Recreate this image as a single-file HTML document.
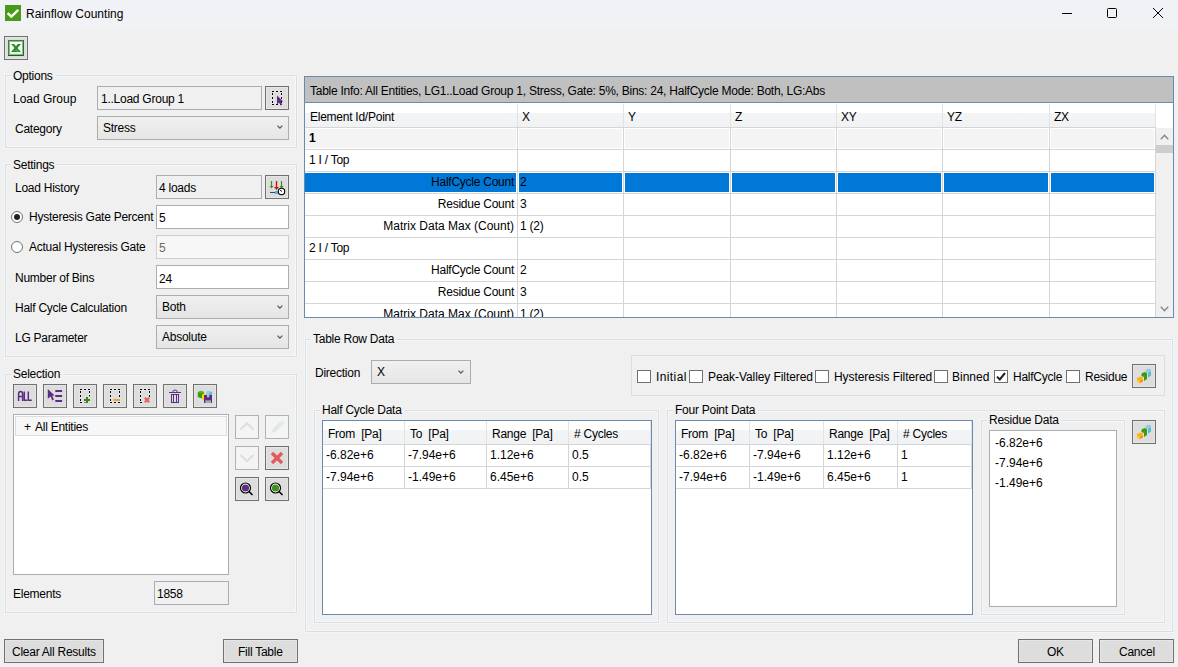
<!DOCTYPE html>
<html><head><meta charset="utf-8">
<style>
*{box-sizing:border-box;margin:0;padding:0}
html,body{width:1178px;height:667px;overflow:hidden;background:#f0f0f0}
body{position:relative;font-family:"Liberation Sans",sans-serif;font-size:12px;color:#000}
.a{position:absolute}
.t{position:absolute;white-space:nowrap;line-height:15px;letter-spacing:-0.25px;margin-top:1px}
.grp{position:absolute;border:1px solid #d5dfe5;box-shadow:inset 0 0 0 1px rgba(255,255,255,0.45),0 0 0 1px rgba(255,255,255,0.35)}
.lbl{position:absolute;background:#f0f0f0;padding:0 3px 0 2px;white-space:nowrap;line-height:15px;letter-spacing:-0.25px;margin-top:1px}
.tb{position:absolute;border:1px solid #abadb3;background:#fff}
.ro{background:#f0f0f0}
.dis{border-color:#ccced2;background:#f7f7f7;color:#6b6b6b}
.btn{position:absolute;border:1px solid #707070;background:#dddddd;box-shadow:inset 0 0 0 1px #e6e6e6}
.btnd{position:absolute;border:1px solid #adb2b5;background:#f4f4f4}
.cb{position:absolute;border:1px solid #acacac;background:linear-gradient(#f0f0f0,#e5e5e5)}
.chev{position:absolute;width:7px;height:4px;background:no-repeat}
.chk{position:absolute;width:14px;height:13px;border:1px solid #707070;background:#fff}
.grid{position:absolute;border:1px solid #688caf;background:#fff;overflow:hidden}
.hl{position:absolute;height:1px;background:#d5d5d5}
.vl{position:absolute;width:1px;background:#d5d5d5}
</style></head><body>
<!-- title bar -->
<div class="a" style="left:0;top:0;width:1178px;height:29px;background:#f1f2f5"></div>
<svg class="a" style="left:5px;top:5px" width="16" height="16"><rect width="16" height="16" fill="#4a9a19"/><path d="M2.6 8.2 L6.3 11.6 L13.3 4.8" stroke="#fff" stroke-width="2.4" fill="none"/></svg>
<div class="t" style="left:26px;top:6px;letter-spacing:0">Rainflow Counting</div>
<svg class="a" style="left:1062px;top:13px" width="10" height="1"><rect width="10" height="1" fill="#000"/></svg>
<div class="a" style="left:1107px;top:8px;width:10px;height:10px;border:1px solid #000;border-radius:1.5px"></div>
<svg class="a" style="left:1152px;top:7px" width="12" height="12"><path d="M1 1L11 11M11 1L1 11" stroke="#000" stroke-width="1"/></svg>
<!-- excel button -->
<div class="btn" style="left:4px;top:36px;width:24px;height:24px"></div>
<svg class="a" style="left:8px;top:40px" width="16" height="16">
<rect x="0" y="0" width="16" height="16" fill="#3a873a"/>
<rect x="1" y="1" width="14" height="14" fill="#7fc27f"/>
<rect x="0" y="15" width="16" height="1" fill="#1f5f1f"/><rect x="15" y="0" width="1" height="16" fill="#2a6f2a"/>
<rect x="2" y="2" width="12" height="12" fill="#ffffff"/>
<rect x="2" y="12" width="12" height="2" fill="#e4f2e4"/>
<path d="M3 4 H6.2 L13 12 H9.8Z" fill="#2f9a2f"/>
<path d="M9.8 4 H13 L6.2 12 H3Z" fill="#2a8a2a"/>
<path d="M6 12 H9.5 L8 10.3Z" fill="#1d6b1d"/>
</svg>

<!-- Options group -->
<div class="grp" style="left:5px;top:75px;width:292px;height:73px"></div>
<div class="lbl" style="left:11px;top:68px">Options</div>
<div class="t" style="left:13px;top:91px;letter-spacing:0">Load Group</div>
<div class="tb ro" style="left:97px;top:86px;width:165px;height:24px"></div>
<div class="t" style="left:101px;top:91px">1..Load Group 1</div>
<div class="btn" style="left:265px;top:86px;width:24px;height:24px"></div>
<svg class="a" style="left:265px;top:86px" width="24" height="24"><rect x="6.5" y="4.5" width="3" height="2" fill="#fff" opacity="0.5"/><rect x="10.5" y="4.5" width="3" height="2" fill="#fff" opacity="0.5"/><rect x="14.5" y="4.5" width="3" height="2" fill="#fff" opacity="0.5"/><rect x="6.5" y="6.5" width="2" height="3" fill="#fff" opacity="0.5"/><rect x="6.5" y="10.5" width="2" height="3" fill="#fff" opacity="0.5"/><rect x="6.5" y="14.5" width="2" height="3" fill="#fff" opacity="0.5"/><rect x="15.5" y="6.5" width="2" height="3" fill="#fff" opacity="0.5"/><rect x="15.5" y="10.5" width="2" height="3" fill="#fff" opacity="0.5"/><rect x="15.5" y="14.5" width="2" height="3" fill="#fff" opacity="0.5"/><rect x="6.5" y="17.5" width="3" height="2" fill="#fff" opacity="0.5"/><rect x="10.5" y="17.5" width="3" height="2" fill="#fff" opacity="0.5"/><rect x="14.5" y="17.5" width="3" height="2" fill="#fff" opacity="0.5"/><rect x="7" y="5" width="2" height="1" fill="#000"/><rect x="11" y="5" width="2" height="1" fill="#000"/><rect x="15" y="5" width="2" height="1" fill="#000"/><rect x="7" y="7" width="1" height="2" fill="#000"/><rect x="7" y="11" width="1" height="2" fill="#000"/><rect x="7" y="15" width="1" height="2" fill="#000"/><rect x="16" y="7" width="1" height="2" fill="#000"/><rect x="16" y="11" width="1" height="2" fill="#000"/><rect x="16" y="15" width="1" height="2" fill="#000"/><rect x="7" y="18" width="2" height="1" fill="#000"/><rect x="11" y="18" width="2" height="1" fill="#000"/><rect x="15" y="18" width="2" height="1" fill="#000"/>
<path d="M12 9.5 L12 18.5 L14 16.6 L15.6 19.5 L17.2 18.7 L15.7 15.8 L18.2 15.5 Z" fill="#5c2d82"/>
</svg>
<div class="t" style="left:15px;top:121px">Category</div>
<div class="cb" style="left:97px;top:116px;width:192px;height:24px"></div>
<div class="t" style="left:103px;top:120px">Stress</div>
<svg class="a" style="left:277px;top:125px" width="7" height="5"><path d="M0.5 0.6 L2.9 3.2 L5.3 0.6" stroke="#555" fill="none" stroke-width="1.2"/></svg>

<!-- Settings group -->
<div class="grp" style="left:5px;top:164px;width:292px;height:193px"></div>
<div class="lbl" style="left:11px;top:157px">Settings</div>
<div class="t" style="left:15px;top:180px">Load History</div>
<div class="tb ro" style="left:156px;top:175px;width:106px;height:24px"></div>
<div class="t" style="left:159px;top:180px">4 loads</div>
<div class="btn" style="left:265px;top:175px;width:24px;height:24px"></div>
<svg class="a" style="left:265px;top:175px" width="24" height="24">
<path d="M6.5 6 V12" stroke="#3a8f1a" stroke-width="1.2"/><path d="M4.5 11 L6.5 13.5 L8.5 11Z" fill="#3a8f1a"/>
<path d="M16.5 6 V12" stroke="#3a8f1a" stroke-width="1.2"/><path d="M14.5 11 L16.5 13.5 L18.5 11Z" fill="#3a8f1a"/>
<path d="M11.5 6 V13" stroke="#d01010" stroke-width="1.4"/><path d="M9 12 L11.5 15 L14 12Z" fill="#d01010"/>
<path d="M5 17.5 H10" stroke="#5c2d82" stroke-width="1"/>
<rect x="10" y="16" width="3" height="3" fill="#4bb8d8"/>
<circle cx="16.5" cy="16.5" r="3.2" fill="#fff" stroke="#000" stroke-width="1.1"/>
<path d="M15 15 L17 16.5" stroke="#000" stroke-width="0.9"/>
</svg>
<svg class="a" style="left:11px;top:211px" width="12" height="12"><circle cx="6" cy="6" r="5.5" fill="#fff" stroke="#707070"/><circle cx="6" cy="6" r="3" fill="#212121"/></svg>
<div class="t" style="left:29px;top:209px">Hysteresis Gate Percent</div>
<div class="tb" style="left:156px;top:205px;width:133px;height:24px"></div>
<div class="t" style="left:159px;top:210px">5</div>
<svg class="a" style="left:11px;top:241px" width="12" height="12"><circle cx="6" cy="6" r="5.5" fill="#fff" stroke="#707070"/></svg>
<div class="t" style="left:29px;top:239px">Actual Hysteresis Gate</div>
<div class="tb dis" style="left:156px;top:235px;width:133px;height:24px"></div>
<div class="t" style="left:159px;top:240px;color:#6b6b6b">5</div>
<div class="t" style="left:15px;top:270px">Number of Bins</div>
<div class="tb" style="left:156px;top:265px;width:133px;height:24px"></div>
<div class="t" style="left:159px;top:271px">24</div>
<div class="t" style="left:15px;top:300px">Half Cycle Calculation</div>
<div class="cb" style="left:156px;top:295px;width:133px;height:24px"></div>
<div class="t" style="left:162px;top:299px">Both</div>
<svg class="a" style="left:277px;top:305px" width="7" height="5"><path d="M0.5 0.6 L2.9 3.2 L5.3 0.6" stroke="#555" fill="none" stroke-width="1.2"/></svg>
<div class="t" style="left:15px;top:330px">LG Parameter</div>
<div class="cb" style="left:156px;top:325px;width:133px;height:24px"></div>
<div class="t" style="left:162px;top:329px">Absolute</div>
<svg class="a" style="left:277px;top:335px" width="7" height="5"><path d="M0.5 0.6 L2.9 3.2 L5.3 0.6" stroke="#555" fill="none" stroke-width="1.2"/></svg>
<!-- Selection group -->
<div class="grp" style="left:5px;top:374px;width:292px;height:239px"></div>
<div class="lbl" style="left:11px;top:366px">Selection</div>
<div class="btn" style="left:13px;top:384px;width:24px;height:24px"></div>
<svg class="a" style="left:13px;top:384px" width="24" height="24"><path d="M5.6 17 V10 Q5.6 7.6 7.6 7.6 Q9.6 7.6 9.6 10 V17 M5.6 12.6 H9.6 M11.3 7.4 V16.2 H14.2 M15.3 7.4 V16.2 H18.8" stroke="#5c2d82" stroke-width="1.5" fill="none"/></svg>
<div class="btn" style="left:43px;top:384px;width:24px;height:24px"></div>
<svg class="a" style="left:43px;top:384px" width="24" height="24">
<path d="M4.8 5 L11.6 11.4 L9.2 11.8 L10.9 15.6 L9.3 16.6 L7.6 12.6 L4.8 14.8 Z" fill="#5c2d82"/>
<rect x="12.3" y="6" width="6.8" height="2" fill="#5c2d82"/><rect x="12.3" y="11" width="6.8" height="2" fill="#5c2d82"/><rect x="12.3" y="16" width="6.8" height="2" fill="#5c2d82"/>
</svg>
<div class="btn" style="left:73px;top:384px;width:24px;height:24px"></div>
<svg class="a" style="left:73px;top:384px" width="24" height="24"><rect x="6.5" y="4.5" width="3" height="2" fill="#fff" opacity="0.5"/><rect x="10.5" y="4.5" width="3" height="2" fill="#fff" opacity="0.5"/><rect x="14.5" y="4.5" width="3" height="2" fill="#fff" opacity="0.5"/><rect x="6.5" y="6.5" width="2" height="3" fill="#fff" opacity="0.5"/><rect x="6.5" y="10.5" width="2" height="3" fill="#fff" opacity="0.5"/><rect x="6.5" y="14.5" width="2" height="3" fill="#fff" opacity="0.5"/><rect x="15.5" y="6.5" width="2" height="3" fill="#fff" opacity="0.5"/><rect x="15.5" y="10.5" width="2" height="3" fill="#fff" opacity="0.5"/><rect x="6.5" y="17.5" width="3" height="2" fill="#fff" opacity="0.5"/><rect x="10.5" y="17.5" width="3" height="2" fill="#fff" opacity="0.5"/><rect x="7" y="5" width="2" height="1" fill="#000"/><rect x="11" y="5" width="2" height="1" fill="#000"/><rect x="15" y="5" width="2" height="1" fill="#000"/><rect x="7" y="7" width="1" height="2" fill="#000"/><rect x="7" y="11" width="1" height="2" fill="#000"/><rect x="7" y="15" width="1" height="2" fill="#000"/><rect x="16" y="7" width="1" height="2" fill="#000"/><rect x="16" y="11" width="1" height="2" fill="#000"/><rect x="7" y="18" width="2" height="1" fill="#000"/><rect x="11" y="18" width="2" height="1" fill="#000"/>
<rect x="10" y="12" width="8" height="8" fill="#dddddd" opacity="0.6"/>
<path d="M14 13 V19 M11 16 H17" stroke="#2e8b0e" stroke-width="2"/>
</svg>
<div class="btn" style="left:103px;top:384px;width:24px;height:24px"></div>
<svg class="a" style="left:103px;top:384px" width="24" height="24"><rect x="6.5" y="4.5" width="3" height="2" fill="#fff" opacity="0.5"/><rect x="10.5" y="4.5" width="3" height="2" fill="#fff" opacity="0.5"/><rect x="14.5" y="4.5" width="3" height="2" fill="#fff" opacity="0.5"/><rect x="6.5" y="6.5" width="2" height="3" fill="#fff" opacity="0.5"/><rect x="6.5" y="10.5" width="2" height="3" fill="#fff" opacity="0.5"/><rect x="6.5" y="14.5" width="2" height="3" fill="#fff" opacity="0.5"/><rect x="15.5" y="6.5" width="2" height="3" fill="#fff" opacity="0.5"/><rect x="15.5" y="10.5" width="2" height="3" fill="#fff" opacity="0.5"/><rect x="6.5" y="17.5" width="3" height="2" fill="#fff" opacity="0.5"/><rect x="10.5" y="17.5" width="3" height="2" fill="#fff" opacity="0.5"/><rect x="14.5" y="17.5" width="3" height="2" fill="#fff" opacity="0.5"/><rect x="7" y="5" width="2" height="1" fill="#000"/><rect x="11" y="5" width="2" height="1" fill="#000"/><rect x="15" y="5" width="2" height="1" fill="#000"/><rect x="7" y="7" width="1" height="2" fill="#000"/><rect x="7" y="11" width="1" height="2" fill="#000"/><rect x="7" y="15" width="1" height="2" fill="#000"/><rect x="16" y="7" width="1" height="2" fill="#000"/><rect x="16" y="11" width="1" height="2" fill="#000"/><rect x="7" y="18" width="2" height="1" fill="#000"/><rect x="11" y="18" width="2" height="1" fill="#000"/><rect x="15" y="18" width="2" height="1" fill="#000"/>
<path d="M10.5 16 H17" stroke="#f7a012" stroke-width="2"/>
</svg>
<div class="btn" style="left:133px;top:384px;width:24px;height:24px"></div>
<svg class="a" style="left:133px;top:384px" width="24" height="24"><rect x="6.5" y="4.5" width="3" height="2" fill="#fff" opacity="0.5"/><rect x="10.5" y="4.5" width="3" height="2" fill="#fff" opacity="0.5"/><rect x="14.5" y="4.5" width="3" height="2" fill="#fff" opacity="0.5"/><rect x="6.5" y="6.5" width="2" height="3" fill="#fff" opacity="0.5"/><rect x="6.5" y="10.5" width="2" height="3" fill="#fff" opacity="0.5"/><rect x="6.5" y="14.5" width="2" height="3" fill="#fff" opacity="0.5"/><rect x="15.5" y="6.5" width="2" height="3" fill="#fff" opacity="0.5"/><rect x="15.5" y="10.5" width="2" height="3" fill="#fff" opacity="0.5"/><rect x="6.5" y="17.5" width="3" height="2" fill="#fff" opacity="0.5"/><rect x="7" y="5" width="2" height="1" fill="#000"/><rect x="11" y="5" width="2" height="1" fill="#000"/><rect x="15" y="5" width="2" height="1" fill="#000"/><rect x="7" y="7" width="1" height="2" fill="#000"/><rect x="7" y="11" width="1" height="2" fill="#000"/><rect x="7" y="15" width="1" height="2" fill="#000"/><rect x="16" y="7" width="1" height="2" fill="#000"/><rect x="16" y="11" width="1" height="2" fill="#000"/><rect x="7" y="18" width="2" height="1" fill="#000"/>
<path d="M11.8 13.8 L16.2 18.2 M16.2 13.8 L11.8 18.2" stroke="#e06464" stroke-width="2.2"/>
</svg>
<div class="btn" style="left:163px;top:384px;width:24px;height:24px"></div>
<svg class="a" style="left:163px;top:384px" width="24" height="24">
<path d="M6 8.5 H18" stroke="#5c2d82" stroke-width="1"/>
<path d="M9.7 8.2 Q9.7 6 12 6 Q14.3 6 14.3 8.2" stroke="#5c2d82" stroke-width="1" fill="none"/>
<rect x="8.5" y="10.5" width="7" height="8" fill="none" stroke="#5c2d82" stroke-width="1"/>
<path d="M10.5 11 V18 M13.5 11 V18" stroke="#5c2d82" stroke-width="1"/>
</svg>
<div class="btn" style="left:193px;top:384px;width:24px;height:24px"></div>
<svg class="a" style="left:193px;top:384px" width="24" height="24">
<path d="M4.8 8.2 L7.8 6.8 L10.8 8 L11 13.2 L8 14.2 L4.8 13Z" fill="#3d9a0a"/><path d="M4.8 8.2 L7.8 6.8 L10.8 8 L7.8 9.3Z" fill="#5cb82a"/>
<path d="M13 7.8 L16 6.8 L19 7.8 L19 12.5 L16 13.2 L13 12.5Z" fill="#8ed0e8"/><path d="M16 9 L19 7.8 L19 12.5 L16 13.2Z" fill="#5cb8dc"/>
<path d="M9 10.5 L11.5 9.6 L14 10.5 L14 15.5 L11.5 16.2 L9 15.5Z" fill="#ffd21a"/><path d="M11.5 11.5 L14 10.5 L14 15.5 L11.5 16.2Z" fill="#f7a012"/>
<rect x="11" y="11" width="8" height="8" fill="#5c2d82"/>
<rect x="14" y="11" width="2.2" height="2.3" fill="#c0c0c8"/>
<rect x="12.3" y="16.3" width="5.7" height="2.7" fill="#a8a8a8"/>
</svg>
<div class="tb" style="left:13px;top:414px;width:216px;height:161px"></div>
<div class="a" style="left:15px;top:416px;width:212px;height:20px;background:#f7f7f7;border:1px solid #dcdcdc"></div>
<div class="t" style="left:24px;top:419px">+</div>
<div class="t" style="left:35px;top:419px">All Entities</div>
<div class="btnd" style="left:235px;top:415px;width:24px;height:24px"></div>
<svg class="a" style="left:235px;top:415px" width="24" height="24"><path d="M5.5 14.5 L12 8.3 L18.5 14.5" stroke="#e0dce4" stroke-width="2.2" fill="none"/></svg>
<div class="btnd" style="left:265px;top:415px;width:24px;height:24px"></div>
<svg class="a" style="left:265px;top:415px" width="24" height="24"><path d="M8.5 13 L15 6.5 L18 9.5 L11.5 16Z" fill="#deeadb"/><path d="M8.5 13 L11.5 16 L6.3 18.2Z" fill="#e4e0e8"/><path d="M16 5.5 L19 8.5" stroke="#e4e0e8" stroke-width="1.2"/></svg>
<div class="btnd" style="left:235px;top:446px;width:24px;height:24px"></div>
<svg class="a" style="left:235px;top:446px" width="24" height="24"><path d="M5.5 9 L12 15.2 L18.5 9" stroke="#e0dce4" stroke-width="2.2" fill="none"/></svg>
<div class="btn" style="left:265px;top:446px;width:24px;height:24px"></div>
<svg class="a" style="left:265px;top:446px" width="24" height="24"><path d="M7 7 L17 17 M17 7 L7 17" stroke="#e05c5c" stroke-width="3.4"/></svg>
<div class="btn" style="left:235px;top:477px;width:24px;height:24px"></div>
<svg class="a" style="left:235px;top:477px" width="24" height="24"><circle cx="10.5" cy="11" r="5" fill="#fff" stroke="#000" stroke-width="1.2"/><circle cx="10.5" cy="11" r="3.6" fill="#5c2d82"/><path d="M14 14.5 L17.5 18" stroke="#000" stroke-width="1.6"/></svg>
<div class="btn" style="left:265px;top:477px;width:24px;height:24px"></div>
<svg class="a" style="left:265px;top:477px" width="24" height="24"><circle cx="10.5" cy="11" r="5" fill="#fff" stroke="#000" stroke-width="1.2"/><circle cx="10.5" cy="11" r="3.6" fill="#3f8f1a"/><path d="M14 14.5 L17.5 18" stroke="#000" stroke-width="1.6"/></svg>
<div class="t" style="left:13px;top:586px">Elements</div>
<div class="tb ro" style="left:154px;top:581px;width:75px;height:24px"></div>
<div class="t" style="left:157px;top:586px">1858</div>

<!-- bottom buttons -->
<div class="btn" style="left:4px;top:639px;width:100px;height:24px"></div>
<div class="t" style="left:12px;top:644px">Clear All Results</div>
<div class="btn" style="left:223px;top:639px;width:75px;height:24px"></div>
<div class="t" style="left:238px;top:644px">Fill Table</div>
<div class="btn" style="left:1018px;top:639px;width:75px;height:24px"></div>
<div class="t" style="left:1047px;top:644px">OK</div>
<div class="btn" style="left:1099px;top:639px;width:75px;height:24px"></div>
<div class="t" style="left:1119px;top:644px">Cancel</div>
<!-- main grid -->
<div class="a" style="left:304px;top:76px;width:870px;height:242px;border:1px solid #688caf;background:#fff"></div>
<div class="a" style="left:305px;top:77px;width:868px;height:26px;background:#c0c0c0;border-bottom:1px solid #688caf"></div>
<div class="t" style="left:310px;top:83px">Table Info: All Entities, LG1..Load Group 1, Stress, Gate: 5%, Bins: 24, HalfCycle Mode: Both, LG:Abs</div>
<div class="a" style="left:305px;top:104px;width:851px;height:24px;background:linear-gradient(#ffffff 0,#ffffff 9px,#f3f4f6 9px,#f1f2f4 100%);border-bottom:1px solid #d5d5d5"></div>
<div class="a" style="left:517px;top:104px;width:1px;height:23px;background:#e2e3e5"></div>
<div class="t" style="left:310px;top:109px">Element Id/Point</div>
<div class="a" style="left:623px;top:104px;width:1px;height:23px;background:#e2e3e5"></div>
<div class="t" style="left:522px;top:109px">X</div>
<div class="a" style="left:730px;top:104px;width:1px;height:23px;background:#e2e3e5"></div>
<div class="t" style="left:628px;top:109px">Y</div>
<div class="a" style="left:836px;top:104px;width:1px;height:23px;background:#e2e3e5"></div>
<div class="t" style="left:735px;top:109px">Z</div>
<div class="a" style="left:942px;top:104px;width:1px;height:23px;background:#e2e3e5"></div>
<div class="t" style="left:841px;top:109px">XY</div>
<div class="a" style="left:1049px;top:104px;width:1px;height:23px;background:#e2e3e5"></div>
<div class="t" style="left:947px;top:109px">YZ</div>
<div class="a" style="left:1155px;top:104px;width:1px;height:23px;background:#e2e3e5"></div>
<div class="t" style="left:1054px;top:109px">ZX</div>
<div class="a" style="left:517px;top:128px;width:1px;height:189px;background:#d5d5d5"></div>
<div class="a" style="left:623px;top:128px;width:1px;height:189px;background:#d5d5d5"></div>
<div class="a" style="left:730px;top:128px;width:1px;height:189px;background:#d5d5d5"></div>
<div class="a" style="left:836px;top:128px;width:1px;height:189px;background:#d5d5d5"></div>
<div class="a" style="left:942px;top:128px;width:1px;height:189px;background:#d5d5d5"></div>
<div class="a" style="left:1049px;top:128px;width:1px;height:189px;background:#d5d5d5"></div>
<div class="a" style="left:1155px;top:128px;width:1px;height:189px;background:#d5d5d5"></div>
<div class="a" style="left:305px;top:149px;width:851px;height:1px;background:#d5d5d5"></div>
<div class="a" style="left:305px;top:171px;width:851px;height:1px;background:#d5d5d5"></div>
<div class="a" style="left:305px;top:193px;width:851px;height:1px;background:#d5d5d5"></div>
<div class="a" style="left:305px;top:215px;width:851px;height:1px;background:#d5d5d5"></div>
<div class="a" style="left:305px;top:237px;width:851px;height:1px;background:#d5d5d5"></div>
<div class="a" style="left:305px;top:259px;width:851px;height:1px;background:#d5d5d5"></div>
<div class="a" style="left:305px;top:281px;width:851px;height:1px;background:#d5d5d5"></div>
<div class="a" style="left:305px;top:303px;width:851px;height:1px;background:#d5d5d5"></div>
<div class="a" style="left:305px;top:129px;width:211px;height:19px;background:#f4f4f4"></div>
<div class="a" style="left:519px;top:129px;width:103px;height:19px;background:#f4f4f4"></div>
<div class="a" style="left:625px;top:129px;width:104px;height:19px;background:#f4f4f4"></div>
<div class="a" style="left:732px;top:129px;width:103px;height:19px;background:#f4f4f4"></div>
<div class="a" style="left:838px;top:129px;width:103px;height:19px;background:#f4f4f4"></div>
<div class="a" style="left:944px;top:129px;width:104px;height:19px;background:#f4f4f4"></div>
<div class="a" style="left:1051px;top:129px;width:103px;height:19px;background:#f4f4f4"></div>
<div class="a" style="left:305px;top:173px;width:211px;height:19px;background:#0078d7"></div>
<div class="a" style="left:519px;top:173px;width:103px;height:19px;background:#0078d7"></div>
<div class="a" style="left:625px;top:173px;width:104px;height:19px;background:#0078d7"></div>
<div class="a" style="left:732px;top:173px;width:103px;height:19px;background:#0078d7"></div>
<div class="a" style="left:838px;top:173px;width:103px;height:19px;background:#0078d7"></div>
<div class="a" style="left:944px;top:173px;width:104px;height:19px;background:#0078d7"></div>
<div class="a" style="left:1051px;top:173px;width:103px;height:19px;background:#0078d7"></div>
<div class="a" style="left:1156px;top:128px;width:17px;height:189px;background:#f0f0f0"></div>
<div class="a" style="left:1156px;top:145px;width:17px;height:8px;background:#cdcdcd"></div>
<svg class="a" style="left:1160px;top:134px" width="9" height="6"><path d="M0.8 5.2 L4.5 1.2 L8.2 5.2" stroke="#858585" stroke-width="1.3" fill="none"/></svg>
<svg class="a" style="left:1160px;top:306px" width="9" height="6"><path d="M0.8 0.8 L4.5 4.8 L8.2 0.8" stroke="#858585" stroke-width="1.3" fill="none"/></svg>
<div class="t" style="left:309px;top:130px"><b>1</b></div>
<div class="t" style="left:309px;top:152px">1 I / Top</div>
<div class="t" style="left:305px;width:209px;top:174px;text-align:right">HalfCycle Count</div>
<div class="t" style="left:520px;top:174px">2</div>
<div class="t" style="left:305px;width:209px;top:196px;text-align:right">Residue Count</div>
<div class="t" style="left:520px;top:196px">3</div>
<div class="t" style="left:305px;width:209px;top:218px;text-align:right;letter-spacing:0">Matrix Data Max (Count)</div>
<div class="t" style="left:520px;top:218px">1 (2)</div>
<div class="t" style="left:309px;top:240px">2 I / Top</div>
<div class="t" style="left:305px;width:209px;top:262px;text-align:right">HalfCycle Count</div>
<div class="t" style="left:520px;top:262px">2</div>
<div class="t" style="left:305px;width:209px;top:284px;text-align:right">Residue Count</div>
<div class="t" style="left:520px;top:284px">3</div>
<div class="t" style="left:305px;width:209px;top:306px;text-align:right;letter-spacing:0">Matrix Data Max (Count)</div>
<div class="t" style="left:520px;top:306px">1 (2)</div>
<div class="a" style="left:304px;top:317px;width:870px;height:1px;background:#688caf"></div>
<div class="a" style="left:300px;top:318px;width:878px;height:12px;background:#f0f0f0"></div>
<!-- Table Row Data -->
<div class="grp" style="left:305px;top:339px;width:868px;height:293px"></div>
<div class="lbl" style="left:311px;top:331px">Table Row Data</div>
<div class="t" style="left:315px;top:365px">Direction</div>
<div class="cb" style="left:371px;top:360px;width:100px;height:24px"></div>
<div class="t" style="left:377px;top:364px">X</div>
<svg class="a" style="left:458px;top:370px" width="7" height="5"><path d="M0.5 0.6 L2.9 3.2 L5.3 0.6" stroke="#555" fill="none" stroke-width="1.2"/></svg>
<div class="a" style="left:631px;top:355px;width:534px;height:41px;border:1px solid #d5dfe5"></div>
<div class="chk" style="left:637px;top:370px"></div>
<div class="t" style="left:656px;top:369px;letter-spacing:0.4px">Initial</div>
<div class="chk" style="left:689px;top:370px"></div>
<div class="t" style="left:708px;top:369px;letter-spacing:-0.08px">Peak-Valley Filtered</div>
<div class="chk" style="left:815px;top:370px"></div>
<div class="t" style="left:834px;top:369px;letter-spacing:-0.06px">Hysteresis Filtered</div>
<div class="chk" style="left:934px;top:370px"></div>
<div class="t" style="left:952px;top:369px;letter-spacing:0">Binned</div>
<div class="chk" style="left:994px;top:370px"></div>
<svg class="a" style="left:994px;top:370px" width="14" height="13"><path d="M3 6.6 L5.8 9.4 L11 3" stroke="#212121" stroke-width="2" fill="none"/></svg>
<div class="t" style="left:1013px;top:369px">HalfCycle</div>
<div class="chk" style="left:1066px;top:370px"></div>
<div class="t" style="left:1085px;top:369px">Residue</div>
<div class="btn" style="left:1132px;top:364px;width:24px;height:24px"></div>
<svg class="a" style="left:1132px;top:364px" width="24" height="24">
<path d="M5 14 L8 12.5 L11 13.5 L11 17 L8 19 L5 18Z" fill="#ffb020"/><path d="M5 16 L8 17 L8 19 L5 18Z" fill="#ffd21a"/><path d="M8 17 L11 16 L11 17 L8 19Z" fill="#ff7a10"/>
<path d="M9.5 9.5 L12.5 8 L15 9 L15 15 L12 17 L12 13 L9.5 12Z" fill="#3f9a0c"/>
<path d="M13.5 6 L16.5 4.5 L19 5.5 L19 11.5 L16 13.5 L16 9 L13.5 8Z" fill="#8ecfe6"/><path d="M16 9 L19 7.5 L19 11.5 L16 13.5Z" fill="#5ab8dc"/>
</svg>
<div class="grp" style="left:314px;top:410px;width:345px;height:213px"></div>
<div class="lbl" style="left:320px;top:402px">Half Cycle Data</div>
<div class="grp" style="left:667px;top:410px;width:498px;height:213px"></div>
<div class="lbl" style="left:673px;top:402px">Four Point Data</div>
<div class="a" style="left:322px;top:420px;width:330px;height:195px;border:1px solid #688caf;background:#fff"></div>
<div class="a" style="left:323px;top:421px;width:328px;height:24px;background:linear-gradient(#ffffff 0,#ffffff 9px,#f3f4f6 9px,#f1f2f4 100%);border-bottom:1px solid #d5d5d5"></div>
<div class="a" style="left:404px;top:421px;width:1px;height:23px;background:#e2e3e5"></div>
<div class="a" style="left:404px;top:445px;width:1px;height:43px;background:#d5d5d5"></div>
<div class="t" style="left:328px;top:426px">From&nbsp; [Pa]</div>
<div class="t" style="left:326px;top:447px;letter-spacing:0">-6.82e+6</div>
<div class="t" style="left:326px;top:469px;letter-spacing:0">-7.94e+6</div>
<div class="a" style="left:486px;top:421px;width:1px;height:23px;background:#e2e3e5"></div>
<div class="a" style="left:486px;top:445px;width:1px;height:43px;background:#d5d5d5"></div>
<div class="t" style="left:410px;top:426px">To&nbsp; [Pa]</div>
<div class="t" style="left:408px;top:447px;letter-spacing:0">-7.94e+6</div>
<div class="t" style="left:408px;top:469px;letter-spacing:0">-1.49e+6</div>
<div class="a" style="left:568px;top:421px;width:1px;height:23px;background:#e2e3e5"></div>
<div class="a" style="left:568px;top:445px;width:1px;height:43px;background:#d5d5d5"></div>
<div class="t" style="left:492px;top:426px">Range&nbsp; [Pa]</div>
<div class="t" style="left:490px;top:447px;letter-spacing:0">1.12e+6</div>
<div class="t" style="left:490px;top:469px;letter-spacing:0">6.45e+6</div>
<div class="a" style="left:650px;top:421px;width:1px;height:23px;background:#e2e3e5"></div>
<div class="a" style="left:650px;top:445px;width:1px;height:43px;background:#d5d5d5"></div>
<div class="t" style="left:574px;top:426px"># Cycles</div>
<div class="t" style="left:572px;top:447px;letter-spacing:0">0.5</div>
<div class="t" style="left:572px;top:469px;letter-spacing:0">0.5</div>
<div class="a" style="left:323px;top:466px;width:328px;height:1px;background:#d5d5d5"></div>
<div class="a" style="left:323px;top:488px;width:328px;height:1px;background:#d5d5d5"></div>
<div class="a" style="left:675px;top:420px;width:298px;height:195px;border:1px solid #688caf;background:#fff"></div>
<div class="a" style="left:676px;top:421px;width:296px;height:24px;background:linear-gradient(#ffffff 0,#ffffff 9px,#f3f4f6 9px,#f1f2f4 100%);border-bottom:1px solid #d5d5d5"></div>
<div class="a" style="left:749px;top:421px;width:1px;height:23px;background:#e2e3e5"></div>
<div class="a" style="left:749px;top:445px;width:1px;height:43px;background:#d5d5d5"></div>
<div class="t" style="left:681px;top:426px">From&nbsp; [Pa]</div>
<div class="t" style="left:679px;top:447px;letter-spacing:0">-6.82e+6</div>
<div class="t" style="left:679px;top:469px;letter-spacing:0">-7.94e+6</div>
<div class="a" style="left:823px;top:421px;width:1px;height:23px;background:#e2e3e5"></div>
<div class="a" style="left:823px;top:445px;width:1px;height:43px;background:#d5d5d5"></div>
<div class="t" style="left:755px;top:426px">To&nbsp; [Pa]</div>
<div class="t" style="left:753px;top:447px;letter-spacing:0">-7.94e+6</div>
<div class="t" style="left:753px;top:469px;letter-spacing:0">-1.49e+6</div>
<div class="a" style="left:897px;top:421px;width:1px;height:23px;background:#e2e3e5"></div>
<div class="a" style="left:897px;top:445px;width:1px;height:43px;background:#d5d5d5"></div>
<div class="t" style="left:829px;top:426px">Range&nbsp; [Pa]</div>
<div class="t" style="left:827px;top:447px;letter-spacing:0">1.12e+6</div>
<div class="t" style="left:827px;top:469px;letter-spacing:0">6.45e+6</div>
<div class="a" style="left:971px;top:421px;width:1px;height:23px;background:#e2e3e5"></div>
<div class="a" style="left:971px;top:445px;width:1px;height:43px;background:#d5d5d5"></div>
<div class="t" style="left:903px;top:426px"># Cycles</div>
<div class="t" style="left:901px;top:447px;letter-spacing:0">1</div>
<div class="t" style="left:901px;top:469px;letter-spacing:0">1</div>
<div class="a" style="left:676px;top:466px;width:296px;height:1px;background:#d5d5d5"></div>
<div class="a" style="left:676px;top:488px;width:296px;height:1px;background:#d5d5d5"></div>
<div class="grp" style="left:981px;top:420px;width:144px;height:195px"></div>
<div class="lbl" style="left:987px;top:412px">Residue Data</div>
<div class="tb" style="left:989px;top:430px;width:128px;height:177px"></div>
<div class="t" style="left:995px;top:435px;letter-spacing:0">-6.82e+6</div>
<div class="t" style="left:995px;top:455px;letter-spacing:0">-7.94e+6</div>
<div class="t" style="left:995px;top:475px;letter-spacing:0">-1.49e+6</div>
<div class="btn" style="left:1132px;top:420px;width:24px;height:24px"></div>
<svg class="a" style="left:1132px;top:420px" width="24" height="24">
<path d="M5 14 L8 12.5 L11 13.5 L11 17 L8 19 L5 18Z" fill="#ffb020"/><path d="M5 16 L8 17 L8 19 L5 18Z" fill="#ffd21a"/><path d="M8 17 L11 16 L11 17 L8 19Z" fill="#ff7a10"/>
<path d="M9.5 9.5 L12.5 8 L15 9 L15 15 L12 17 L12 13 L9.5 12Z" fill="#3f9a0c"/>
<path d="M13.5 6 L16.5 4.5 L19 5.5 L19 11.5 L16 13.5 L16 9 L13.5 8Z" fill="#8ecfe6"/><path d="M16 9 L19 7.5 L19 11.5 L16 13.5Z" fill="#5ab8dc"/>
</svg>
</body></html>
